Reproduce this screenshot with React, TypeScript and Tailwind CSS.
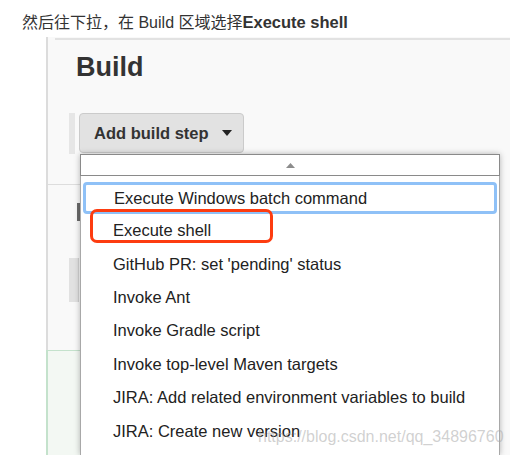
import React from "react";

const steps = [
  "Execute shell",
  "GitHub PR: set 'pending' status",
  "Invoke Ant",
  "Invoke Gradle script",
  "Invoke top-level Maven targets",
  "JIRA: Add related environment variables to build",
  "JIRA: Create new version",
];

export default function App() {
  return (
    <div className="relative w-[510px] h-[455px] overflow-hidden bg-white font-['Liberation_Sans','Noto_Sans_CJK_SC',sans-serif] text-[#333]">
      {/* caption */}
      <div className="h-[37px] pl-[22px] pt-[12px] text-[16px] leading-[20px] text-[#333]">
        然后往下拉，在 Build 区域选择<b className="font-bold text-[16.5px]">Execute shell</b>
      </div>

      {/* jenkins panel */}
      <div className="ml-[46px] h-[418px] border-l-2 border-[#dcdcdc] bg-[#f9f9f9] flex flex-col">
        <div className="ml-[7px] mt-[1px] h-[2px] bg-[#e2e2e2]" />
        <h2 className="mt-[11px] pl-[28px] text-[27px] leading-[32px] font-bold text-[#333]">Build</h2>

        <div className="mt-[30px] pl-[21px] flex items-start h-[41px]">
          <div className="w-[6px] h-[41px] bg-[#e6e6e6]" />
          <button className="ml-[4px] w-[165px] h-[40px] rounded-[4px] border border-[#cbcbcb] bg-[#e2e2e2] flex items-center pl-[14px] text-[16.5px] font-bold text-[#333]">
            Add build step
            <svg className="ml-[13px]" width="10" height="6" viewBox="0 0 10 6">
              <path d="M0 0h10L5 6z" fill="#222" />
            </svg>
          </button>
        </div>

        <div className="flex flex-1 min-h-0">
          {/* gutter behind the menu */}
          <div className="w-[32px] flex flex-col">
            <div className="h-[30px]" />
            <div className="h-px bg-[#dddddd]" />
            <div className="mt-[18px] ml-[29px] w-[3px] h-[18px] bg-[#6b6b6b]" />
            <div className="mt-[37px] ml-[21px] w-[10px] h-[44px] bg-[#e1e1e1] border-r border-[#d2d2d2]" />
            <div className="mt-[48px] -ml-[2px] flex-1 border-t border-l-2 border-[#c4e2cc] bg-[#f3f8f3]" />
          </div>

          {/* dropdown */}
          <div className="relative w-[420px] flex flex-col shadow-[0_0_6px_rgba(0,0,0,0.28)]">
            <div className="h-[22px] border border-[#8a8a8a] bg-white flex items-center justify-center">
              <svg width="9" height="5" viewBox="0 0 9 5">
                <path d="M0 5h9L4.5 0z" fill="#8c8c8c" />
              </svg>
            </div>
            <div className="flex-1 bg-white border-l border-r border-[#a8a8a8] pt-[6px] text-[16.5px] text-[#222]">
              <div className="mx-[2px] h-[32px] border-[3px] border-[#8fc1f7] rounded-[4px] flex items-center pl-[28px]">
                Execute Windows batch command
              </div>
              {steps.map((s) => (
                <div key={s} className="h-[33.4px] flex items-center pl-[32px]">
                  {s}
                </div>
              ))}
              <div className="absolute left-[10px] top-[55px] w-[183px] h-[34px] border-[3px] border-[#fd3c10] rounded-[7px]" />
            </div>
          </div>
        </div>
      </div>

      <div className="absolute left-[258px] top-[427px] text-[16px] leading-[20px] text-[rgba(170,170,170,0.55)]">
        https://blog.csdn.net/qq_34896760
      </div>
    </div>
  );
}
